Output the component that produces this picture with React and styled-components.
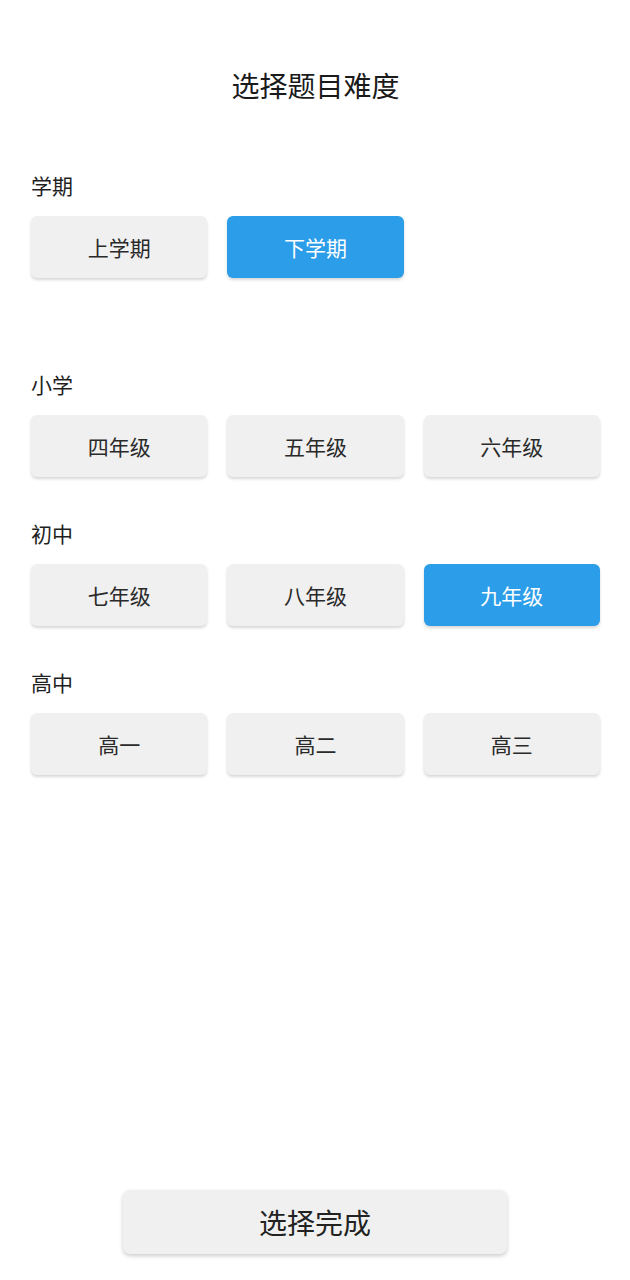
import React, { useState } from 'react';
import styled, { createGlobalStyle } from 'styled-components';

const GlobalStyle = createGlobalStyle`
  body {
    margin: 0;
    background: #ffffff;
    font-family: 'Noto Sans CJK SC', 'Noto Sans', sans-serif;
    color: #222222;
  }
`;

const Page = styled.div`
  min-height: 100vh;
  box-sizing: border-box;
  display: flex;
  flex-direction: column;
  padding: 65px 30px 26px 31px;
`;

const Title = styled.h1`
  margin: 0 0 66px;
  font-size: 28px;
  line-height: 40px;
  font-weight: 400;
  text-align: center;
  color: #1a1a1a;
`;

const Section = styled.section`
  margin-bottom: ${props => props.$gap}px;
`;

const Label = styled.div`
  font-size: 21px;
  line-height: 28px;
  margin-bottom: 17px;
  color: #1f1f1f;
`;

const Row = styled.div`
  display: grid;
  grid-template-columns: repeat(3, 1fr);
  gap: 20px;
`;

const Option = styled.button`
  height: 62px;
  border: none;
  border-radius: 6px;
  font-family: inherit;
  font-size: 21px;
  background: ${props => props.$active ? '#2b9de9' : '#f0f0f0'};
  color: ${props => props.$active ? '#ffffff' : '#2a2a2a'};
  box-shadow: 0 2px 3px rgba(0, 0, 0, 0.16);
  cursor: pointer;
`;

const Footer = styled.div`
  margin-top: auto;
  display: flex;
  justify-content: center;
  padding-right: 1px;
`;

const DoneButton = styled.button`
  width: 384px;
  height: 64px;
  border: none;
  border-radius: 7px;
  background: #f0f0f0;
  font-family: inherit;
  font-size: 28px;
  color: #222222;
  box-shadow: 0 2px 4px rgba(0, 0, 0, 0.2);
  cursor: pointer;
`;

const groups = [
  { key: 'term', label: '学期', items: ['上学期', '下学期'], gap: 92 },
  { key: 'primary', label: '小学', items: ['四年级', '五年级', '六年级'], gap: 42 },
  { key: 'middle', label: '初中', items: ['七年级', '八年级', '九年级'], gap: 42 },
  { key: 'high', label: '高中', items: ['高一', '高二', '高三'], gap: 0 },
];

export default function App() {
  const [term, setTerm] = useState('下学期');
  const [grade, setGrade] = useState('九年级');

  return (
    <>
      <GlobalStyle />
      <Page>
        <Title>选择题目难度</Title>
        {groups.map(g => (
          <Section key={g.key} $gap={g.gap}>
            <Label>{g.label}</Label>
            <Row>
              {g.items.map(item => {
                const active = g.key === 'term' ? term === item : grade === item;
                return (
                  <Option
                    key={item}
                    $active={active}
                    onClick={() => (g.key === 'term' ? setTerm(item) : setGrade(item))}
                  >
                    {item}
                  </Option>
                );
              })}
            </Row>
          </Section>
        ))}
        <Footer>
          <DoneButton>选择完成</DoneButton>
        </Footer>
      </Page>
    </>
  );
}
